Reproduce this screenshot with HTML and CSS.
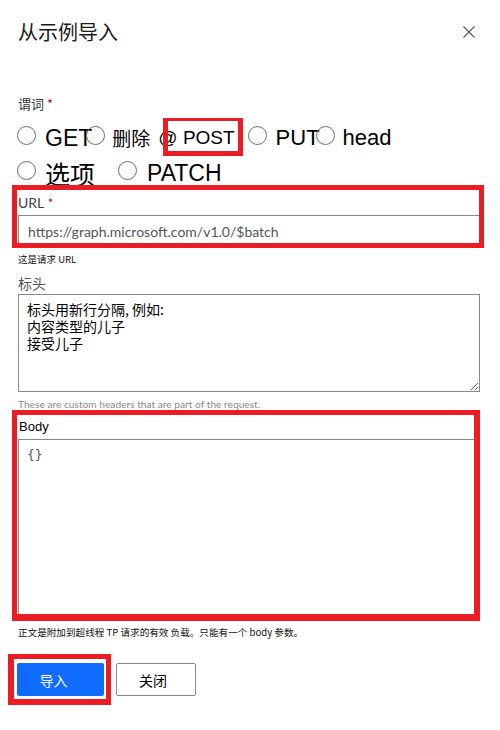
FILE: index.html
```html
<!DOCTYPE html>
<html lang="zh-CN">
<head>
<meta charset="utf-8">
<title>从示例导入</title>
<link rel="stylesheet" href="styles.css">
</head>
<body>
<div class="dialog">
  <header class="dlg-head">
    <h1 class="dlg-title">从示例导入</h1>
    <button class="dlg-close" aria-label="关闭">
      <svg width="12" height="12" viewBox="0 0 12 12"><path d="M0.5 0.5 L11.5 11.5 M11.5 0.5 L0.5 11.5" stroke="#555" stroke-width="1.1" fill="none"/></svg>
    </button>
  </header>

  <div class="verb-label">谓词 <span class="req">*</span></div>
  <div class="radio-row row1">
    <span class="radio"></span><span class="opt opt-get">GET</span>
    <span class="radio r-del"></span><span class="opt opt-del">删除</span>
    <span class="opt opt-post">@ <span class="hl-post">POST</span></span>
    <span class="radio r-put"></span><span class="opt opt-put">PUT</span>
    <span class="radio r-head"></span><span class="opt opt-head">head</span>
  </div>
  <div class="radio-row row2">
    <span class="radio"></span><span class="opt opt-options">选项</span>
    <span class="radio r-patch"></span><span class="opt opt-patch">PATCH</span>
  </div>

  <div class="url-group">
    <div class="url-label">URL <span class="req">*</span></div>
    <input class="text-input" type="text" value="https://graph.microsoft.com/v1.0/$batch">
  </div>
  <div class="hint">这是请求 URL</div>

  <div class="headers-label">标头</div>
  <textarea class="headers-area">标头用新行分隔, 例如:
内容类型的儿子
接受儿子</textarea>
  <div class="hint-gray">These are custom headers that are part of the request.</div>

  <div class="body-group">
    <div class="body-label">Body</div>
    <textarea class="body-area">{}</textarea>
  </div>
  <div class="footer-note">正文是附加到超线程 TP 请求的有效 负载。只能有一个 body 参数。</div>

  <div class="actions">
    <button class="btn btn-primary">导入</button>
    <button class="btn btn-secondary">关闭</button>
  </div>
</div>
</body>
</html>
```
FILE: styles.css
```css
html {
  background: #fff;
}
body {
  margin: 0;
  font-family: "Noto Sans", "Noto Sans CJK SC", sans-serif;
  color: #222;
}
.dialog {
  width: 500px;
  height: 730px;
  box-sizing: border-box;
  padding: 0 20px 0 18px;
}
.dlg-head {
  height: 64px;
  display: flex;
  align-items: center;
  justify-content: space-between;
}
.dlg-title {
  margin: 0;
  font: 400 20px/24px "Noto Sans CJK SC", sans-serif;
  color: #1b1b1b;
}
.dlg-close {
  background: none;
  border: 0;
  padding: 0;
  width: 12px;
  height: 12px;
  margin-right: 5px;
  display: flex;
}
.verb-label {
  margin-top: 30px;
  font: 13px/20px "Noto Sans CJK SC", sans-serif;
  color: #333;
}
.req {
  color: #a4262c;
}
.radio-row {
  display: flex;
  align-items: center;
  height: 26px;
  margin-left: -1px;
}
.row1 { margin-top: 10px; }
.row2 { margin-top: 9px; }
.radio {
  flex: none;
  width: 19px;
  height: 19px;
  box-sizing: border-box;
  border: 1.5px solid #707070;
  border-radius: 50%;
  background: transparent;
  margin-top: -3px;
}
.opt {
  font-family: "Liberation Sans", "Noto Sans CJK SC", sans-serif;
  color: #000;
  line-height: 26px;
  white-space: nowrap;
  flex: none;
  padding-top: 1px;
}
.opt-get { font-size: 23px; margin-left: 9px; }
.r-del { margin-left: -6px; }
.opt-del { font-size: 19px; margin-left: 7px; font-family: "Noto Sans CJK SC", sans-serif; }
.opt-post { font-size: 19px; margin-left: 8px; }
.hl-post { position: relative; }
.hl-post::after {
  content: "";
  position: absolute;
  left: -20px;
  right: -8px;
  top: -9px;
  bottom: -8px;
  border-style: solid;
  border-color: #ec1c24;
  border-width: 3px 5px 5px 5px;
  pointer-events: none;
}
.r-put { margin-left: 13px; }
.opt-put { font-size: 22px; margin-left: 9px; }
.r-head { margin-left: -4px; }
.opt-head { font-size: 22px; margin-left: 8px; }
.opt-options { font-size: 25px; margin-left: 9px; font-family: "Noto Sans CJK SC", sans-serif; }
.r-patch { margin-left: 23px; }
.opt-patch { font-size: 23px; margin-left: 10px; }

.url-group {
  position: relative;
  margin-top: 6px;
}
.url-group::after {
  content: "";
  position: absolute;
  left: -6px;
  right: -4px;
  top: -6px;
  bottom: -3px;
  border: 5px solid #ec1c24;
  pointer-events: none;
}
.url-label {
  font: 14px/24px Lato, "Noto Sans CJK SC", sans-serif;
  color: #444;
}
.text-input {
  display: block;
  width: 100%;
  box-sizing: border-box;
  height: 30px;
  margin: 0;
  border: 1px solid #8a8a8a;
  border-radius: 0;
  padding: 2px 9px 0;
  font: 14px Lato, sans-serif;
  color: #555;
  background: #fff;
}
.hint {
  margin-top: 7px;
  font: 9.5px/14px "Noto Sans CJK SC", sans-serif;
  color: #111;
}
.headers-label {
  margin-top: 6px;
  font: 14px/22px "Noto Sans CJK SC", sans-serif;
  color: #555;
}
.headers-area {
  display: block;
  width: 100%;
  box-sizing: border-box;
  height: 98px;
  margin: 0;
  border: 1px solid #8a8a8a;
  border-radius: 0;
  padding: 6px 8px;
  font: 14px/17px "Noto Sans CJK SC", sans-serif;
  color: #000;
  resize: vertical;
}
.hint-gray {
  margin-top: 5px;
  font: 10.2px/14px Lato, sans-serif;
  color: #8a8a8a;
}
.body-group {
  position: relative;
  margin-top: 4px;
}
.body-group::after {
  content: "";
  position: absolute;
  left: -6px;
  right: 0;
  top: -5px;
  bottom: -3px;
  border-style: solid;
  border-color: #ec1c24;
  border-width: 5px 6px 7px 5px;
  pointer-events: none;
}
.body-label {
  font: 13px/24px "Liberation Sans", sans-serif;
  color: #000;
  padding-left: 1px;
}
.body-area {
  display: block;
  width: 100%;
  box-sizing: border-box;
  height: 179px;
  margin: 0;
  border: 1px solid #8a8a8a;
  border-radius: 0;
  padding: 6px 8px;
  font: 13px/18px "DejaVu Sans Mono", monospace;
  color: #555;
  resize: none;
}
.footer-note {
  margin-top: 7px;
  font: 9.6px/14px "Noto Sans CJK SC", sans-serif;
  color: #111;
}
.actions {
  margin-top: 24px;
  margin-left: -1px;
  display: flex;
  gap: 12px;
}
.btn {
  height: 33px;
  box-sizing: border-box;
  border-radius: 2px;
  font: 14px/1 "Noto Sans CJK SC", sans-serif;
  cursor: pointer;
}
.btn-primary {
  position: relative;
  width: 87px;
  background: #0f6cff;
  color: #fff;
  border: 0;
  padding: 0 14px 0 0;
}
.btn-primary::after {
  content: "";
  position: absolute;
  left: -9px;
  right: -7px;
  top: -9px;
  bottom: -9px;
  border-style: solid;
  border-color: #ec1c24;
  border-width: 5px 5px 6px 6px;
  pointer-events: none;
}
.btn-secondary {
  width: 80px;
  background: #fff;
  color: #000;
  border: 1px solid #8a8a8a;
  padding: 0 6px 0 0;
}
```
